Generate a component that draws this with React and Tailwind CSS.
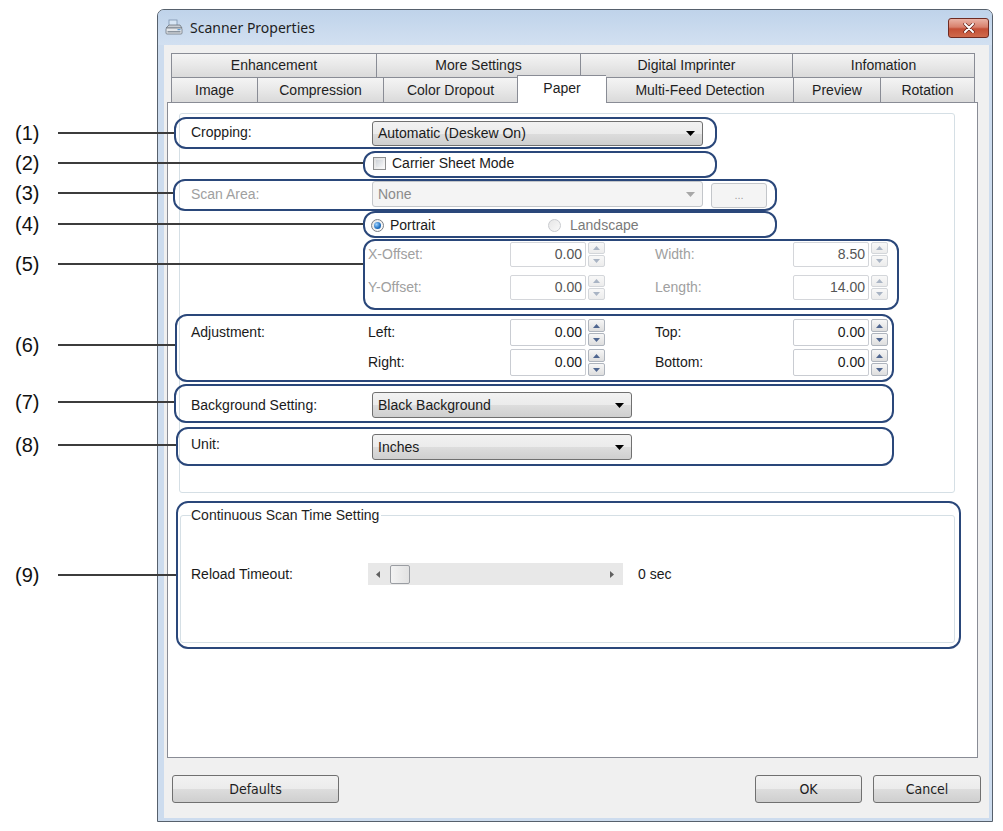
import React from 'react'
import clsx from 'clsx'

const raised = 'bg-[linear-gradient(#f2f2f2,#ebebeb_50%,#dddddd_50%,#cfcfcf)]'

const row1 = [
  ['Enhancement', 'w-[205px]'],
  ['More Settings', 'w-[204px]'],
  ['Digital Imprinter', 'w-[212px]'],
  ['Infomation', 'w-[183px]'],
]

const row2 = [
  ['Image', 'w-[86px]'],
  ['Compression', 'w-[126px]'],
  ['Color Dropout', 'w-[134px]'],
  ['Paper', 'w-[89px]', true],
  ['Multi-Feed Detection', 'w-[187px]'],
  ['Preview', 'w-[87px]'],
  ['Rotation', 'w-[95px]'],
]

function Tab({ label, w, last, active }) {
  return (
    <div
      className={clsx(
        'flex shrink-0 items-center justify-center border-l border-t border-[#898c95] text-[14px] text-[#1e1e1e]',
        w,
        last && 'border-r',
        active
          ? 'relative z-10 -mt-[2px] h-[28px] bg-white pb-[2px]'
          : 'h-full bg-[linear-gradient(#f4f4f4,#e8e8e8_50%,#dadada)]'
      )}
    >
      {label}
    </div>
  )
}

function Caret({ dim }) {
  return (
    <svg width="9" height="5" viewBox="0 0 9 5">
      <polygon points="0,0 9,0 4.5,5" fill={dim ? '#a8a8a8' : '#000'} />
    </svg>
  )
}

function Combo({ w, text, disabled }) {
  return (
    <div
      className={clsx(
        'ml-[4px] flex h-full items-center justify-between rounded-[3px] border pl-[5px] pr-[7px]',
        w,
        disabled ? 'border-[#c3c6ca] bg-[#f4f4f4] text-[#8a8a8a]' : clsx('border-[#707070] text-[#1a1a1a]', raised)
      )}
    >
      <span>{text}</span>
      <Caret dim={disabled} />
    </div>
  )
}

function Spin({ dim }) {
  const tri = dim ? '#a9b4c4' : '#4f6690'
  const box = clsx(
    'flex flex-1 items-center justify-center rounded-[2px] border',
    dim ? 'border-[#d3d6da] bg-[linear-gradient(#f8f8f8,#ececec)]' : 'border-[#aeb4bd] bg-[linear-gradient(#f6f6f6,#dedede)]'
  )
  return (
    <div className="ml-[2px] flex h-full w-[17px] flex-col gap-[1px]">
      <div className={box}>
        <svg width="7" height="4" viewBox="0 0 7 4">
          <polygon points="0,4 3.5,0 7,4" fill={tri} />
        </svg>
      </div>
      <div className={box}>
        <svg width="7" height="4" viewBox="0 0 7 4">
          <polygon points="0,0 7,0 3.5,4" fill={tri} />
        </svg>
      </div>
    </div>
  )
}

function Num({ v, dim }) {
  return (
    <div
      className={clsx(
        'flex h-full w-[76px] items-center justify-end rounded-[2px] border bg-white pr-[3px]',
        dim ? 'border-[#d4d6da] text-[#555]' : 'border-[#c9ccd2] text-[#1a1a1a]'
      )}
    >
      {v}
    </div>
  )
}

function Pair({ h, l1, v1, l2, v2, dim }) {
  return (
    <div className={clsx('flex items-center', h)}>
      <div className={clsx('w-[142px]', dim && 'text-[#a0a0a0]')}>{l1}</div>
      <Num v={v1} dim={dim} />
      <Spin dim={dim} />
      <div className={clsx('ml-[50px] w-[138px]', dim && 'text-[#a0a0a0]')}>{l2}</div>
      <Num v={v2} dim={dim} />
      <Spin dim={dim} />
    </div>
  )
}

function Button({ w, children }) {
  return (
    <div
      className={clsx(
        "flex h-[28px] items-center justify-center rounded-[3px] border border-[#707070] font-['DejaVu_Sans_Condensed','Liberation_Sans',sans-serif] text-[14px] text-[#1e1e1e]",
        w,
        raised
      )}
    >
      {children}
    </div>
  )
}

function ScannerIcon() {
  return (
    <svg width="18" height="18" viewBox="0 0 18 18">
      <rect x="4" y="1" width="8" height="6" fill="#d8e6f5" stroke="#7d93ad" strokeWidth="0.8" />
      <path d="M1 9 L4 6 H15 L17 9 Z" fill="#c9ced4" stroke="#6f7780" strokeWidth="0.8" />
      <rect x="1" y="9" width="16" height="6" rx="1" fill="#e3e6ea" stroke="#6f7780" strokeWidth="0.8" />
      <rect x="2.5" y="12" width="13" height="1.5" fill="#8b949e" />
      <rect x="12.5" y="10" width="3" height="1.2" fill="#5b9bd5" />
    </svg>
  )
}

function Window() {
  return (
    <div className="flex h-[813px] w-[836px] flex-col rounded-t-[7px] border border-[#56606c] bg-[#cddcee]">
      <div className="flex h-[35px] shrink-0 items-center rounded-t-[6px] bg-[linear-gradient(#bfd3ea,#d2e0f1)] pl-[7px] pr-[3px]">
        <ScannerIcon />
        <div className="ml-[7px] font-['Noto_Sans',sans-serif] text-[14px] text-[#1e1e1e]">Scanner Properties</div>
        <div className="ml-auto mt-[1px] flex h-[20px] w-[41px] items-center justify-center rounded-[3px] border border-[#6f2b22] bg-[linear-gradient(#eab3a6,#d8806c_45%,#c44f36_55%,#cf6a4c)]">
          <svg width="12" height="10" viewBox="0 0 12 10">
            <path d="M2 1 L10 9 M10 1 L2 9" stroke="#5a1a12" strokeWidth="3.2" strokeLinecap="round" />
            <path d="M2 1 L10 9 M10 1 L2 9" stroke="#fff" strokeWidth="2" strokeLinecap="round" />
          </svg>
        </div>
      </div>

      <div className="mb-[3px] ml-[6px] mr-[3px] flex-1 bg-[#f0f0f0] pl-[3px] pt-[8px] font-['Liberation_Sans',Arial,sans-serif] text-[14px] text-[#1a1a1a]">
        <div className="ml-[4px] flex h-[24px]">
          {row1.map(([l, w], i) => (
            <Tab key={l} label={l} w={w} last={i === row1.length - 1} />
          ))}
        </div>
        <div className="ml-[4px] flex h-[25px] items-start">
          {row2.map(([l, w, a], i) => (
            <Tab key={l} label={l} w={w} active={a} last={i === row2.length - 1} />
          ))}
        </div>

        <div className="relative h-[656px] w-[811px] border border-[#898c95] bg-white pl-[11px] pt-[10px]">
          <div className="flex h-[380px] w-[776px] flex-col rounded-[3px] border border-[#d5dfe5] pl-[11px] pt-[7px]">
            <div className="flex h-[25px] items-center">
              <div className="w-[177px] -mt-[3px]">Cropping:</div>
              <Combo w="w-[331px]" text="Automatic (Deskew On)" />
            </div>

            <div className="mt-[10px] flex h-[14px] items-center">
              <div className="w-[177px]" />
              <div className="ml-[5px] h-[13px] w-[13px] border border-[#8e8f8f] bg-[linear-gradient(135deg,#dcdcdc,#fbfbfb)] p-[2px]">
                <div className="h-full w-full bg-[linear-gradient(135deg,#cfd3d8,#f4f5f6)]" />
              </div>
              <div className="ml-[6px]">Carrier Sheet Mode</div>
            </div>

            <div className="mt-[11px] flex h-[26px] items-center">
              <div className="w-[177px] text-[#a0a0a0]">Scan Area:</div>
              <Combo w="w-[331px]" text="None" disabled />
              <div className="ml-[8px] mt-[3px] flex h-[25px] w-[56px] items-center justify-center rounded-[3px] border border-[#c3c6ca] bg-[#f4f4f4] text-[11px] text-[#a0a0a0]">
                ...
              </div>
            </div>

            <div className="mt-[11px] flex h-[14px] items-center">
              <div className="w-[177px]" />
              <div className="flex w-[180px] items-center">
                <div className="ml-[3px] flex h-[13px] w-[13px] items-center justify-center rounded-full border border-[#7b7f85] bg-[linear-gradient(135deg,#e4e4e4,#fdfdfd)]">
                  <div className="h-[7px] w-[7px] rounded-full bg-[radial-gradient(circle_at_35%_35%,#9fd3ff,#1f6fc0_60%,#164f8f)]" />
                </div>
                <div className="ml-[6px]">Portrait</div>
              </div>
              <div className="h-[13px] w-[13px] rounded-full border border-[#c9cbcf] bg-[linear-gradient(135deg,#e6e6e6,#f9f9f9)]" />
              <div className="ml-[9px] text-[#7a7a7a]">Landscape</div>
            </div>

            <div className="mt-[10px] flex">
              <div className="w-[177px]" />
              <div className="flex flex-col gap-[8px]">
                <Pair h="h-[25px]" l1="X-Offset:" v1="0.00" l2="Width:" v2="8.50" dim />
                <Pair h="h-[25px]" l1="Y-Offset:" v1="0.00" l2="Length:" v2="14.00" dim />
              </div>
            </div>

            <div className="mt-[19px] flex">
              <div className="w-[177px] pt-[3px]">Adjustment:</div>
              <div className="flex flex-col gap-[3px]">
                <Pair h="h-[27px]" l1="Left:" v1="0.00" l2="Top:" v2="0.00" />
                <Pair h="h-[27px]" l1="Right:" v1="0.00" l2="Bottom:" v2="0.00" />
              </div>
            </div>

            <div className="mt-[16px] flex h-[26px] items-center">
              <div className="w-[177px]">Background Setting:</div>
              <Combo w="w-[260px]" text="Black Background" />
            </div>

            <div className="mt-[16px] flex h-[26px] items-center">
              <div className="w-[177px] -mt-[6px]">Unit:</div>
              <Combo w="w-[260px]" text="Inches" />
            </div>
          </div>

          <fieldset className="ml-[1px] mt-[14px] h-[136px] w-[775px] rounded-[3px] border border-[#d5dfe5] pl-[10px]">
            <legend className="pr-[2px] leading-[16px] text-[#1e1e1e]">Continuous Scan Time Setting</legend>
            <div className="mt-[40px] flex h-[22px] items-center">
              <div className="w-[177px]">Reload Timeout:</div>
              <div className="flex h-[22px] w-[255px] items-center bg-[#e8e8e8] pl-[8px] pr-[9px]">
                <svg width="4" height="7" viewBox="0 0 4 7">
                  <polygon points="4,0 4,7 0,3.5" fill="#606060" />
                </svg>
                <div className="ml-[10px] h-[19px] w-[20px] rounded-[2px] border border-[#9a9da2] bg-[linear-gradient(90deg,#f3f3f3,#e2e2e2)]" />
                <div className="flex-1" />
                <svg width="4" height="7" viewBox="0 0 4 7">
                  <polygon points="0,0 0,7 4,3.5" fill="#606060" />
                </svg>
              </div>
              <div className="ml-[15px]">0 sec</div>
            </div>
          </fieldset>
        </div>

        <div className="mt-[17px] flex w-[814px] items-center">
          <div className="ml-[5px]">
            <Button w="w-[167px]">Defaults</Button>
          </div>
          <div className="ml-auto flex gap-[11px]">
            <Button w="w-[107px]">OK</Button>
            <Button w="w-[108px]">Cancel</Button>
          </div>
        </div>
      </div>
    </div>
  )
}

const labels = [
  ['(1)', 'top-[121px]'],
  ['(2)', 'top-[151px]'],
  ['(3)', 'top-[181px]'],
  ['(4)', 'top-[212px]'],
  ['(5)', 'top-[252px]'],
  ['(6)', 'top-[333px]'],
  ['(7)', 'top-[390px]'],
  ['(8)', 'top-[433px]'],
  ['(9)', 'top-[563px]'],
]

const lines = [
  'top-[132px] w-[116px]',
  'top-[162px] w-[305px]',
  'top-[192px] w-[115px]',
  'top-[223px] w-[305px]',
  'top-[263px] w-[305px]',
  'top-[344px] w-[117px]',
  'top-[401px] w-[116px]',
  'top-[444px] w-[118px]',
  'top-[574px] w-[118px]',
]

const callouts = [
  'left-[174px] top-[117px] w-[543px] h-[32px]',
  'left-[363px] top-[151px] w-[354px] h-[27px]',
  'left-[173px] top-[179px] w-[604px] h-[32px]',
  'left-[363px] top-[211px] w-[414px] h-[27px]',
  'left-[363px] top-[239px] w-[536px] h-[71px]',
  'left-[175px] top-[314px] w-[719px] h-[68px]',
  'left-[174px] top-[384px] w-[720px] h-[39px]',
  'left-[176px] top-[427px] w-[718px] h-[39px]',
  'left-[176px] top-[501px] w-[785px] h-[148px]',
]

export default function App() {
  return (
    <div className="relative h-[831px] w-[1003px] overflow-hidden bg-white pl-[157px] pt-[9px]">
      <Window />

      {callouts.map((c) => (
        <div key={c} className={clsx('pointer-events-none absolute rounded-[12px] border-2 border-[#2a477a]', c)} />
      ))}
      {lines.map((c) => (
        <div key={c} className={clsx('absolute left-[58px] h-[2px] bg-[#3c3c3c]', c)} />
      ))}
      {labels.map(([t, c]) => (
        <div key={t} className={clsx("absolute left-[15px] h-[24px] font-['Liberation_Sans',Arial,sans-serif] text-[20px] leading-[24px] text-[#111]", c)}>
          {t}
        </div>
      ))}
    </div>
  )
}
